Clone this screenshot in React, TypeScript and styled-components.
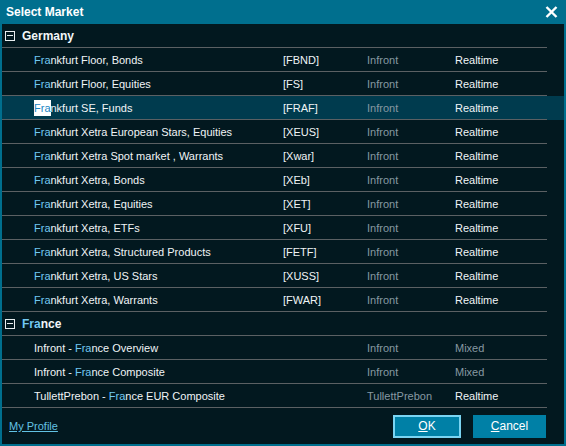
import styled, { createGlobalStyle } from "styled-components";

const GlobalStyle = createGlobalStyle`
  html, body {
    margin: 0;
    padding: 0;
    background: #02181f;
  }
  body {
    font-family: "Liberation Sans", Arial, sans-serif;
  }
`;

type Market = {
  prefix?: string;
  name: string;
  code?: string;
  source: string;
  mode: "Realtime" | "Mixed";
  selected?: boolean;
};

type Group = {
  title: string;
  items: Market[];
};

const groups: Group[] = [
  {
    title: "Germany",
    items: [
      { name: "Frankfurt Floor, Bonds", code: "[FBND]", source: "Infront", mode: "Realtime" },
      { name: "Frankfurt Floor, Equities", code: "[FS]", source: "Infront", mode: "Realtime" },
      { name: "Frankfurt SE, Funds", code: "[FRAF]", source: "Infront", mode: "Realtime", selected: true },
      { name: "Frankfurt Xetra European Stars, Equities", code: "[XEUS]", source: "Infront", mode: "Realtime" },
      { name: "Frankfurt Xetra Spot market , Warrants", code: "[Xwar]", source: "Infront", mode: "Realtime" },
      { name: "Frankfurt Xetra, Bonds", code: "[XEb]", source: "Infront", mode: "Realtime" },
      { name: "Frankfurt Xetra, Equities", code: "[XET]", source: "Infront", mode: "Realtime" },
      { name: "Frankfurt Xetra, ETFs", code: "[XFU]", source: "Infront", mode: "Realtime" },
      { name: "Frankfurt Xetra, Structured Products", code: "[FETF]", source: "Infront", mode: "Realtime" },
      { name: "Frankfurt Xetra, US Stars", code: "[XUSS]", source: "Infront", mode: "Realtime" },
      { name: "Frankfurt Xetra, Warrants", code: "[FWAR]", source: "Infront", mode: "Realtime" },
    ],
  },
  {
    title: "France",
    items: [
      { prefix: "Infront - ", name: "France Overview", source: "Infront", mode: "Mixed" },
      { prefix: "Infront - ", name: "France Composite", source: "Infront", mode: "Mixed" },
      { prefix: "TullettPrebon - ", name: "France EUR Composite", source: "TullettPrebon", mode: "Realtime" },
    ],
  },
];

const SEARCH = "Fra";

const Window = styled.div`
  width: 566px;
  height: 446px;
  box-sizing: border-box;
  background: #006f8e;
  padding: 0 2px 2px 2px;
  display: flex;
  flex-direction: column;
  overflow: hidden;
`;

const TitleBar = styled.div`
  height: 24px;
  flex: none;
  display: flex;
  align-items: center;
  justify-content: space-between;
  padding: 0 6px 0 4px;
  color: #ffffff;
  font-size: 12px;
  font-weight: bold;
`;

const CloseButton = styled.button`
  border: 0;
  background: none;
  padding: 0;
  width: 14px;
  height: 14px;
  display: flex;
  align-items: center;
  justify-content: center;
  cursor: pointer;
`;

const Body = styled.div`
  flex: 1;
  background: #02181f;
  display: flex;
  flex-direction: column;
`;

const List = styled.div`
  display: flex;
  flex-direction: column;
`;

const rowLine = `
  background-image: linear-gradient(#5b6063, #5b6063);
  background-repeat: no-repeat;
  background-position: left bottom;
  background-size: calc(100% - 17px) 1px;
`;

const GroupRow = styled.div`
  height: 24px;
  box-sizing: border-box;
  padding: 0 0 1px 3px;
  display: flex;
  align-items: center;
  gap: 7px;
  color: #f2f6f8;
  font-size: 12px;
  font-weight: bold;
  ${rowLine}
`;

const Toggle = styled.span`
  width: 10px;
  height: 10px;
  box-sizing: border-box;
  border: 1px solid #e8eef0;
  display: flex;
  align-items: center;
  justify-content: center;
  &::before {
    content: "";
    width: 6px;
    height: 1px;
    background: #e8eef0;
  }
`;

const MarketRow = styled.div<{ $selected?: boolean }>`
  height: 24px;
  box-sizing: border-box;
  padding: 0 0 1px 32px;
  display: grid;
  grid-template-columns: 249px 84px 88px 1fr;
  align-items: center;
  font-size: 11px;
  color: #f0f4f6;
  background-color: ${(p) => (p.$selected ? "#003b4e" : "transparent")};
  ${rowLine}
`;

const Cell = styled.span<{ $muted?: boolean }>`
  white-space: nowrap;
  color: ${(p) => (p.$muted ? "#8798a2" : "#f0f4f6")};
`;

const Match = styled.span<{ $selected?: boolean }>`
  color: ${(p) => (p.$selected ? "#1a86c4" : "#72c8f2")};
  background: ${(p) => (p.$selected ? "#ffffff" : "transparent")};
  padding: ${(p) => (p.$selected ? "2px 0" : "0")};
`;

const Footer = styled.div`
  flex: 1;
  display: flex;
  align-items: center;
  justify-content: space-between;
  padding: 0 18px 0 7px;
`;

const ProfileLink = styled.a`
  color: #62c2e4;
  font-size: 11px;
  text-decoration: underline;
  cursor: pointer;
`;

const Buttons = styled.div`
  display: flex;
  gap: 12px;
`;

const DialogButton = styled.button<{ $primary?: boolean; $width: number }>`
  width: ${(p) => p.$width}px;
  height: 23px;
  box-sizing: border-box;
  border: 2px solid ${(p) => (p.$primary ? "#7ad4f2" : "#0080a6")};
  background: #0080a6;
  color: #ffffff;
  font-family: "Liberation Sans", Arial, sans-serif;
  font-size: 12px;
  cursor: pointer;
  padding: 0;
  & u {
    text-decoration: underline;
  }
`;

const Highlighted = ({ text, selected }: { text: string; selected?: boolean }) => {
  const idx = text.indexOf(SEARCH);
  if (idx < 0) return <>{text}</>;
  return (
    <>
      {text.slice(0, idx)}
      <Match $selected={selected}>{SEARCH}</Match>
      {text.slice(idx + SEARCH.length)}
    </>
  );
};

export default function App() {
  return (
    <>
      <GlobalStyle />
      <Window>
        <TitleBar>
          <span>Select Market</span>
          <CloseButton aria-label="Close">
            <svg width="13" height="12" viewBox="0 0 13 12">
              <path d="M1.5 1 L11.5 11 M11.5 1 L1.5 11" stroke="#ffffff" strokeWidth="2.4" />
            </svg>
          </CloseButton>
        </TitleBar>
        <Body>
          <List>
            {groups.map((g) => (
              <div key={g.title}>
                <GroupRow>
                  <Toggle />
                  <span>
                    <Highlighted text={g.title} />
                  </span>
                </GroupRow>
                {g.items.map((m) => (
                  <MarketRow key={m.name + m.source} $selected={m.selected}>
                    <Cell>
                      {m.prefix}
                      <Highlighted text={m.name} selected={m.selected} />
                    </Cell>
                    <Cell>{m.code}</Cell>
                    <Cell $muted>{m.source}</Cell>
                    <Cell $muted={m.mode === "Mixed"}>{m.mode}</Cell>
                  </MarketRow>
                ))}
              </div>
            ))}
          </List>
          <Footer>
            <ProfileLink>My Profile</ProfileLink>
            <Buttons>
              <DialogButton $primary $width={68}>
                <u>O</u>K
              </DialogButton>
              <DialogButton $width={73}>
                <u>C</u>ancel
              </DialogButton>
            </Buttons>
          </Footer>
        </Body>
      </Window>
    </>
  );
}
